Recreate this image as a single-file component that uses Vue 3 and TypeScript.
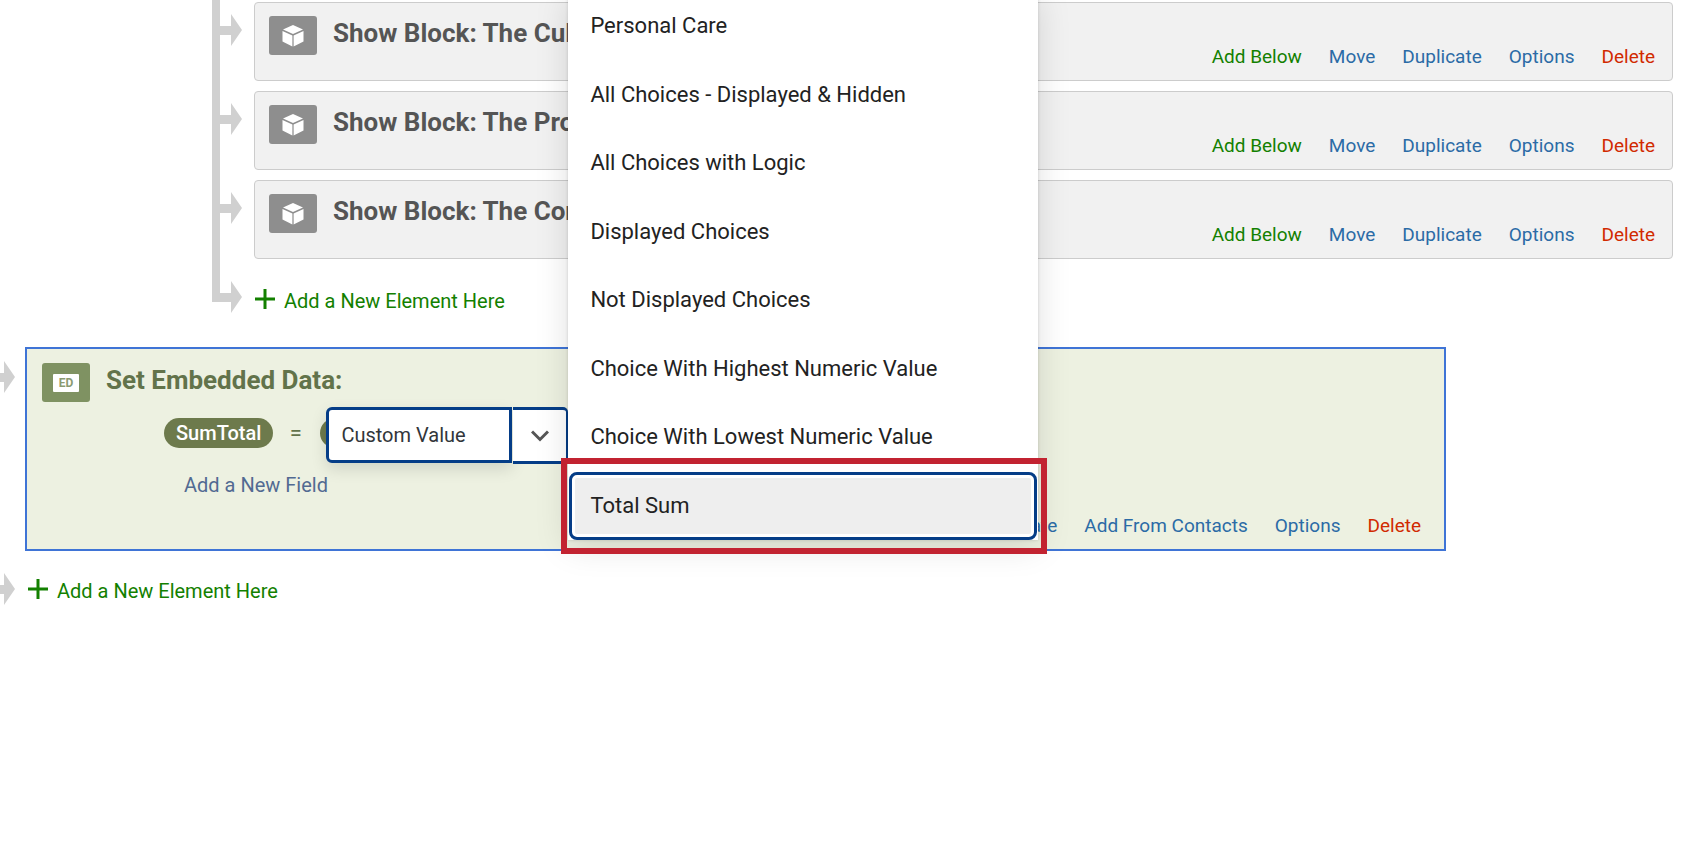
<script setup lang="ts">
import { ref } from 'vue'

interface Action {
  label: string
  tone?: 'add' | 'delete'
}

const blocks: string[] = ['Show Block: The Cul', 'Show Block: The Pro', 'Show Block: The Con']

const blockActions: Action[] = [
  { label: 'Add Below', tone: 'add' },
  { label: 'Move' },
  { label: 'Duplicate' },
  { label: 'Options' },
  { label: 'Delete', tone: 'delete' },
]

const dataActions: Action[] = [
  { label: 'Duplicate' },
  { label: 'Add From Contacts' },
  { label: 'Options' },
  { label: 'Delete', tone: 'delete' },
]

const choices: string[] = [
  'Personal Care',
  'All Choices - Displayed & Hidden',
  'All Choices with Logic',
  'Displayed Choices',
  'Not Displayed Choices',
  'Choice With Highest Numeric Value',
  'Choice With Lowest Numeric Value',
  'Total Sum',
]

const active = ref('Total Sum')
const fieldValue = ref('Custom Value')
</script>

<template>
  <main class="flow">
    <ul class="nested">
      <li v-for="block in blocks" :key="block" class="row">
        <span class="branch">
          <svg class="arrow" viewBox="0 0 30 32" aria-hidden="true"><path d="M0 12H19V0L30 16L19 32V21H0Z" /></svg>
        </span>
        <article class="card">
          <span class="badge">
            <svg class="cube" viewBox="0 0 22 22" aria-hidden="true">
              <path d="M11 0L21 4.4L11 9L1 4.4Z" />
              <path d="M0.5 6L10.4 10.5V21.5L0.5 16.5Z" />
              <path d="M21.5 6L11.6 10.5V21.5L21.5 16.5Z" />
            </svg>
          </span>
          <h2 class="title">{{ block }}</h2>
          <nav class="actions">
            <a v-for="a in blockActions" :key="a.label" href="#" :class="a.tone">{{ a.label }}</a>
          </nav>
        </article>
      </li>
      <li class="row last">
        <span class="branch">
          <svg class="arrow" viewBox="0 0 30 32" aria-hidden="true"><path d="M0 12H19V0L30 16L19 32V21H0Z" /></svg>
        </span>
        <a href="#" class="new-element">
          <svg class="plus" viewBox="0 0 20 20" aria-hidden="true"><path d="M10 0V20M0 10H20" /></svg>
          <span>Add a New Element Here</span>
        </a>
      </li>
    </ul>

    <div class="outer-row data-row">
      <svg class="arrow" viewBox="0 0 30 32" aria-hidden="true"><path d="M0 12H19V0L30 16L19 32V21H0Z" /></svg>
      <section class="data">
        <header class="data-head">
          <span class="badge green"><span class="ed">ED</span></span>
          <h2 class="title">Set Embedded Data:</h2>
        </header>
        <div class="field">
          <span class="pill">SumTotal</span>
          <span class="equals">=</span>
          <div class="pill value">
            <div class="combo">
              <input v-model="fieldValue" class="combo-input" type="text" aria-label="Field value" />
              <button class="combo-toggle" type="button" aria-label="Show choices">
                <svg viewBox="0 0 18 12" aria-hidden="true"><path d="M1 1.5L9 9.5L17 1.5" /></svg>
              </button>
              <ul class="menu">
                <li v-for="c in choices" :key="c" class="option" :class="{ active: c === active }">
                  <button type="button" @click="active = c">{{ c }}</button>
                </li>
              </ul>
            </div>
          </div>
        </div>
        <a href="#" class="new-field">Add a New Field</a>
        <nav class="actions">
          <a v-for="a in dataActions" :key="a.label" href="#" :class="a.tone">{{ a.label }}</a>
        </nav>
      </section>
    </div>

    <div class="outer-row end-row">
      <svg class="arrow" viewBox="0 0 30 32" aria-hidden="true"><path d="M0 12H19V0L30 16L19 32V21H0Z" /></svg>
      <a href="#" class="new-element">
        <svg class="plus" viewBox="0 0 20 20" aria-hidden="true"><path d="M10 0V20M0 10H20" /></svg>
        <span>Add a New Element Here</span>
      </a>
    </div>
  </main>
</template>

<style>
body {
  background: #fff;
}
</style>

<style scoped>
.flow {
  display: flow-root;
  min-height: 100vh;
  overflow: hidden;
  box-sizing: border-box;
  font-family: Roboto, "Liberation Sans", sans-serif;
  font-size: 20px;
}
.flow *,
.flow *::before,
.flow *::after {
  box-sizing: border-box;
}
ul {
  list-style: none;
  margin: 0;
  padding: 0;
}
a {
  text-decoration: none;
}
.nested {
  margin: -8px 27px 0 212px;
}
.row {
  display: flex;
}
.branch {
  flex: none;
  width: 42px;
  padding-top: 22px;
  background: linear-gradient(#d0d0d0, #d0d0d0) no-repeat 0 0 / 8px 100%;
}
.last .branch {
  height: 63px;
  background-size: 8px 43px;
}
.arrow {
  display: block;
  flex: none;
  width: 30px;
  height: 32px;
  fill: #d0d0d0;
}
.card {
  flex: 1;
  display: flex;
  height: 79px;
  margin-top: 10px;
  padding: 13px 17px 0 14px;
  border: 1px solid #ccc;
  border-radius: 4px;
  background: #f1f1f1;
}
.badge {
  flex: none;
  display: flex;
  align-items: center;
  justify-content: center;
  width: 48px;
  height: 39px;
  border-radius: 3px;
  background: #8e8e8e;
}
.cube {
  width: 22px;
  height: 22px;
  fill: #fff;
}
.title {
  margin: 1px 0 0 16px;
  font-size: 26px;
  line-height: 32px;
  font-weight: 700;
  color: #555;
  white-space: nowrap;
}
.actions {
  display: flex;
  justify-content: flex-end;
  gap: 27px;
  margin-left: auto;
  font-size: 19px;
  line-height: 24px;
  white-space: nowrap;
}
.card .actions {
  align-self: flex-end;
  margin-bottom: 11px;
}
.actions a {
  color: #2b6ba6;
}
.actions a.add {
  color: #138000;
}
.actions a.delete {
  color: #d12a00;
}
.new-element {
  display: flex;
  align-items: center;
  gap: 9px;
  color: #138000;
  line-height: 28px;
}
.last .new-element {
  align-self: flex-start;
  margin: 28px 0 0 1px;
}
.plus {
  width: 20px;
  height: 20px;
  margin-bottom: 5px;
  stroke: #138000;
  stroke-width: 3;
}
.outer-row {
  display: flex;
  margin-left: -15px;
}
.data-row {
  margin-top: 25px;
  margin-right: 254px;
}
.data-row .arrow {
  margin-top: 14px;
}
.data {
  flex: 1;
  margin-left: 10px;
  height: 204px;
  padding: 14px 23px 0 15px;
  border: 2px solid #3f74d6;
  background: #edf1e1;
}
.data-head {
  display: flex;
}
.green {
  background: #7f9262;
}
.ed {
  padding: 0 6px;
  border-radius: 1px;
  background: #fff;
  color: #8b9a70;
  font-size: 12px;
  line-height: 18px;
  font-weight: 700;
}
.data .title {
  color: #62734a;
}
.field {
  display: flex;
  align-items: center;
  margin: 16px 0 0 122px;
}
.pill {
  height: 30px;
  padding: 0 12px;
  border-radius: 15px;
  background: #6d7a4c;
  color: #fff;
  font-weight: 500;
  line-height: 30px;
}
.equals {
  width: 47px;
  padding-right: 2px;
  text-align: center;
  font-size: 22px;
  line-height: 30px;
  color: #62734a;
}
.value {
  position: relative;
  width: 60px;
}
.combo {
  position: absolute;
  top: -11px;
  left: 6px;
  display: flex;
  align-items: flex-start;
  width: 242px;
}
.combo-input {
  flex: 1;
  min-width: 0;
  height: 56px;
  padding: 0 12px;
  border: 3px solid #053d87;
  border-radius: 6px 0 0 6px;
  background: #fff;
  color: #32363a;
  font: inherit;
  font-weight: 400;
  outline: 0;
  box-shadow: 0 6px 16px rgba(0, 0, 0, 0.12);
}
.combo-toggle {
  display: flex;
  align-items: center;
  justify-content: center;
  width: 55px;
  height: 57px;
  margin-left: 1px;
  padding: 0;
  border: solid #053d87;
  border-width: 3px 2px 3px 0;
  border-radius: 0 5px 0 0;
  background: #fff;
}
.combo-toggle svg {
  width: 18px;
  height: 12px;
  fill: none;
  stroke: #555;
  stroke-width: 3;
}
.menu {
  position: absolute;
  left: 100%;
  bottom: -76px;
  display: grid;
  grid-auto-rows: 1fr;
  width: 470px;
  height: 548px;
  background: #fff;
  box-shadow: 0 0 3px rgba(0, 0, 0, 0.15), 0 6px 32px rgba(0, 0, 0, 0.13);
}
.option {
  position: relative;
  padding: 0 1px;
}
.option button {
  display: block;
  width: 100%;
  height: 100%;
  padding: 0 21px;
  border: 0;
  background: none;
  color: #222;
  font: inherit;
  font-weight: 400;
  font-size: 22px;
  text-align: left;
  white-space: nowrap;
}
.option.active button {
  padding: 0 18px;
  border: 3px solid #053d87;
  border-radius: 8px;
  background: #eee;
  box-shadow: inset 0 0 0 3px #fff;
}
.option.active::after {
  content: "";
  position: absolute;
  inset: -14px -9px -14px -7px;
  border: 6px solid #c22331;
  pointer-events: none;
}
.new-field {
  display: block;
  width: max-content;
  margin: 23px 0 0 142px;
  line-height: 28px;
  color: #526a92;
}
.data .actions {
  margin-top: 15px;
}
.end-row {
  margin-top: 22px;
}
.end-row .new-element {
  align-self: flex-start;
  margin: 4px 0 0 13px;
}
</style>
